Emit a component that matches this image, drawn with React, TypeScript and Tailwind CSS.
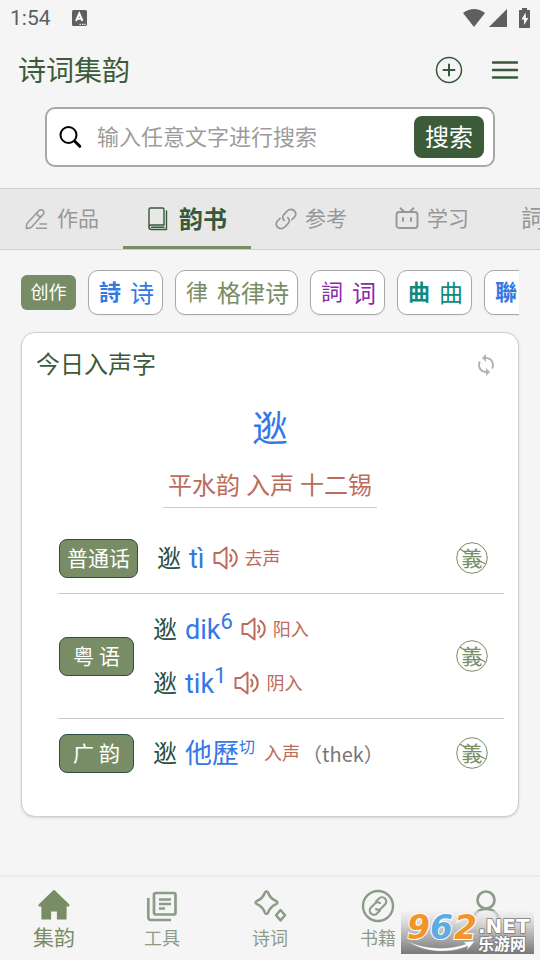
import React from "react";

type IconProps = { className?: string };

const PencilIcon = ({ className }: IconProps) => (
  <svg className={className} viewBox="0 0 24 24" fill="none" stroke="currentColor" strokeWidth="1.5" strokeLinecap="round" strokeLinejoin="round" aria-hidden="true">
    <path d="M14.500 3.600a2.700 2.700 0 0 1 3.900-.2 2.700 2.700 0 0 1 .3 3.900L7.500 19.600a5 5 0 0 1-2.600 1.300l-3 .6.2-3.300a5 5 0 0 1 1.300-2.700z" />
    <path d="M12.400 6c.5 2.300 2 3.700 4.200 4M15.500 17h6.500M12 21.200h10" />
  </svg>
);

const BookIcon = ({ className }: IconProps) => (
  <svg className={className} viewBox="0 0 24 24" fill="none" stroke="currentColor" strokeWidth="1.400" strokeLinecap="round" strokeLinejoin="round" aria-hidden="true">
    <path d="M3.500 1h12a1.500 1.500 0 0 1 1.500 1.500V18H4a2 2 0 0 0-2 2V2.500A1.500 1.500 0 0 1 3.500 1z" />
    <path d="M2 20a2.500 2.500 0 0 0 2.500 2.500H19.500V4M4.500 20.300H17" />
  </svg>
);

const ChainIcon = ({ className }: IconProps) => (
  <svg className={className} viewBox="0 0 24 24" fill="none" stroke="currentColor" strokeWidth="1.800" strokeLinecap="round" strokeLinejoin="round" aria-hidden="true">
    <path d="M10 13.500a4.700 4.700 0 0 1-.4-6.300l3.800-4a5.200 5.200 0 0 1 8 .2 5 5 0 0 1-.3 6.600l-2.600 2.600" />
    <path d="M14 10.500a4.700 4.700 0 0 1 .4 6.300l-3.800 4a5.200 5.200 0 0 1-8-.2 5 5 0 0 1 .3-6.600l2.600-2.600" />
  </svg>
);

const ScreenIcon = ({ className }: IconProps) => (
  <svg className={className} viewBox="0 0 24 24" fill="none" stroke="currentColor" strokeWidth="1.900" strokeLinecap="round" strokeLinejoin="round" aria-hidden="true">
    <rect x="1.500" y="5" width="21" height="16" rx="2.800" />
    <path d="m5.500 1.300 4 3.700M18.500 1.300 14.500 5M8 11v3M16 11v3" />
  </svg>
);

const SearchIcon = ({ className }: IconProps) => (
  <svg className={className} viewBox="0 0 24 24" fill="none" stroke="currentColor" strokeLinecap="round" aria-hidden="true">
    <circle cx="9.500" cy="10" r="8" strokeWidth="2" />
    <path d="m15.800 16.300 5 5" strokeWidth="3" />
  </svg>
);

const PlusCircleIcon = ({ className }: IconProps) => (
  <svg className={className} viewBox="0 0 28 28" fill="none" stroke="currentColor" aria-hidden="true">
    <circle cx="14" cy="14" r="12.500" strokeWidth="1.500" />
    <path d="M14 8.500v11M8.500 14h11" strokeWidth="2" strokeLinecap="round" />
  </svg>
);

const MenuIcon = ({ className }: IconProps) => (
  <svg className={className} viewBox="0 0 28 28" fill="none" stroke="currentColor" strokeWidth="2.400" strokeLinecap="round" aria-hidden="true">
    <path d="M2 6.500h24M2 14h24M2 21.500h24" />
  </svg>
);

const SyncIcon = ({ className }: IconProps) => (
  <svg className={className} viewBox="0 0 24 24" fill="currentColor" aria-hidden="true">
    <path d="M12 4V1L8 5l4 4V6c3.310 0 6 2.690 6 6 0 1.010-.25 1.970-.7 2.800l1.460 1.460A7.930 7.930 0 0 0 20 12c0-4.420-3.580-8-8-8zm0 14c-3.310 0-6-2.690-6-6 0-1.010.25-1.970.7-2.800L5.240 7.740A7.930 7.930 0 0 0 4 12c0 4.420 3.580 8 8 8v3l4-4-4-4v3z" />
  </svg>
);

const SpeakerIcon = ({ className }: IconProps) => (
  <svg className={className} viewBox="0 0 26 24" fill="none" stroke="currentColor" strokeWidth="2" strokeLinejoin="round" aria-hidden="true">
    <path d="M1.500 7h5L13.500 1.500v21L6.500 17h-5z" />
    <path d="M16.500 8.200c2.700 1.800 2.700 5.800 0 7.600M18.500 3.500c7 3.500 7 13.500 0 17" />
  </svg>
);

const HomeIcon = ({ className }: IconProps) => (
  <svg className={className} viewBox="0 0 32 32" fill="currentColor" stroke="currentColor" strokeWidth="1.200" strokeLinejoin="round" aria-hidden="true">
    <path d="M16 1.500 30.500 15.500a.8.800 0 0 1-.5 1.500H28v13h-8.500v-8h-7v8H4V17H2a.8.800 0 0 1-.5-1.500z" />
  </svg>
);

const LibraryIcon = ({ className }: IconProps) => (
  <svg className={className} viewBox="0 0 34 34" fill="none" stroke="currentColor" strokeWidth="2.700" aria-hidden="true">
    <rect x="9" y="4" width="21.500" height="21.500" rx="1.800" />
    <path d="M3.300 9v19.500A2.500 2.500 0 0 0 5.800 31H26M14 10.500h12M14 15h12M14 19.500h6" />
  </svg>
);

const SparkIcon = ({ className }: IconProps) => (
  <svg className={className} viewBox="0 0 34 34" fill="none" stroke="currentColor" strokeWidth="2.500" strokeLinejoin="round" aria-hidden="true">
    <path d="M12 3.500c1-1.300 2-1.300 3 0 1.500 4.500 3.500 6.500 8.500 8.700 1.200.8 1.200 2 0 2.600-5 2.200-7 4.200-8.500 9.200-1 1.300-2 1.300-3 0-1.500-5-3.500-7-8.500-9.200-1.200-.6-1.200-1.800 0-2.600C8.500 10 10.500 8 12 3.500z" />
    <path d="m27.500 21 4.500 5.200-4.500 5.200-4.500-5.200z" />
  </svg>
);

const LinkCircleIcon = ({ className }: IconProps) => (
  <svg className={className} viewBox="0 0 34 34" fill="none" stroke="currentColor" strokeLinecap="round" aria-hidden="true">
    <circle cx="17" cy="17" r="15" strokeWidth="2.400" />
    <path d="m15 12.500 3-3a4.200 4.200 0 0 1 6 6l-4 4a4.200 4.200 0 0 1-5 .5M19 21.500l-3 3a4.200 4.200 0 0 1-6-6l4-4a4.200 4.200 0 0 1 5-.5" strokeWidth="2.100" />
  </svg>
);

const PersonIcon = ({ className }: IconProps) => (
  <svg className={className} viewBox="0 0 34 34" fill="none" stroke="currentColor" strokeWidth="2.700" aria-hidden="true">
    <circle cx="17" cy="11" r="8.500" />
    <path d="M4 33c0-8 5-13 13-13s13 5 13 13" />
  </svg>
);

const StatusBar = () => (
  <div className="flex h-9 items-center justify-between pl-[10px] pr-2 text-[#5f5f5f]">
    <div className="flex items-center gap-5">
      <span className="text-[21px] leading-8">1:54</span>
      <svg className="size-4" viewBox="0 0 16 16" aria-hidden="true">
        <rect x="1" width="15" height="16" rx="1.500" fill="currentColor" />
        <path d="M5 11 8.300 3.500 11.500 11M6.200 8.800h4" fill="none" stroke="#fff" strokeWidth="2" />
        <path d="M8.500 14.300h1.300M11 14.300h1.300M13.300 14.300h1.300" stroke="#fff" strokeWidth="1.300" />
      </svg>
    </div>
    <svg className="h-5 w-[70px]" viewBox="0 0 70 20" fill="currentColor" aria-hidden="true">
      <path d="M1 5Q12-3 23 5L12 19z" />
      <path d="M27 19 45 1v18z" />
      <path d="M57 2h3V0h5v2h3v18H57z" />
      <path d="M63.500 4.500 59.500 11.500h2.500V17l4.500-7H64z" fill="#f5f5f5" />
    </svg>
  </div>
);

const tabs = [
  { label: "作品", Icon: PencilIcon, size: "h-6 w-[25px]", active: false },
  { label: "韵书", Icon: BookIcon, size: "size-6", active: true },
  { label: "参考", Icon: ChainIcon, size: "size-[22px]", active: false },
  { label: "学习", Icon: ScreenIcon, size: "size-6", active: false },
];

const chips = [
  { mark: "詩", label: "诗", tone: "text-[#3577e5]", weight: "font-bold" },
  { mark: "律", label: "格律诗", tone: "text-[#788d65]", weight: "font-normal" },
  { mark: "詞", label: "词", tone: "text-[#8a2aa8]", weight: "font-normal" },
  { mark: "曲", label: "曲", tone: "text-[#0f8a80]", weight: "font-bold" },
  { mark: "聯", label: "对联", tone: "text-[#3577e5]", weight: "font-bold" },
];

type Reading = { sound: string; sup?: string; tone: string; audio: boolean; note?: string };

const entries: { source: string; pill: string; row: string; readings: Reading[] }[] = [
  { source: "普通话", pill: "w-[79px]", row: "h-[70px]", readings: [{ sound: "tì", tone: "去声", audio: true }] },
  {
    source: "粤 语",
    pill: "w-[75px]",
    row: "h-[125px] border-t",
    readings: [
      { sound: "dik", sup: "6", tone: "阳入", audio: true },
      { sound: "tik", sup: "1", tone: "阴入", audio: true },
    ],
  },
  {
    source: "广 韵",
    pill: "w-[75px]",
    row: "h-[69px] border-t",
    readings: [{ sound: "他歷", sup: "切", tone: "入声", audio: false, note: "（thek）" }],
  },
];

const ReadingLine = ({ reading }: { reading: Reading }) => (
  <div className="flex h-[54px] items-center whitespace-nowrap pt-[2px]">
    <span className="mr-2 text-2xl text-[#2c4f46]">逖</span>
    <span className="flex items-center text-[27px] text-[#3577e5]">
      {reading.sound}
      {reading.sup && (
        <sup className={reading.sup === "切" ? "top-0 mb-3 text-base leading-4" : "top-0 mb-4 text-[22px] leading-6"}>{reading.sup}</sup>
      )}
    </span>
    {reading.audio && (
      <button type="button" aria-label="播放读音" className="ml-2 pb-[2px] text-[#bd6b5a]">
        <SpeakerIcon className="h-6 w-[26px]" />
      </button>
    )}
    <span className={reading.audio ? "ml-[6px] text-lg text-[#bd6b5a]" : "ml-[9px] text-lg text-[#bd6b5a]"}>{reading.tone}</span>
    {reading.note && <span className="ml-[2px] font-['Noto_Sans_CJK_SC',sans-serif] text-xl text-[#777777]">{reading.note}</span>}
  </div>
);

const MeaningButton = () => (
  <button type="button" aria-label="释义" className="ml-auto mr-4 text-[#788d65]">
    <svg className="size-8" viewBox="0 0 32 32" aria-hidden="true">
      <circle cx="16" cy="16" r="15.300" fill="none" stroke="currentColor" strokeWidth="1" />
      <path d="M4 7 10 11M22 18 29.500 22" stroke="currentColor" strokeWidth="1.200" />
      <text x="16" y="24" textAnchor="middle" fontSize="21" fill="currentColor">義</text>
    </svg>
  </button>
);

const navItems = [
  { label: "集韵", Icon: HomeIcon, active: true },
  { label: "工具", Icon: LibraryIcon, active: false },
  { label: "诗词", Icon: SparkIcon, active: false },
  { label: "书籍", Icon: LinkCircleIcon, active: false },
  { label: "我的", Icon: PersonIcon, active: false },
];

const SiteBadge = () => (
  <svg className="pointer-events-none absolute bottom-[6px] right-[6px] h-[43px] w-[133px]" viewBox="0 0 133 43" role="img" aria-label="962.NET 乐游网">
    <defs>
      <linearGradient id="badge-bg" x1="0" y1="0" x2="0" y2="1">
        <stop offset="0" stopColor="#f0f0f0" stopOpacity="0.6" />
        <stop offset="0.500" stopColor="#b4b4b4" stopOpacity="0.9" />
        <stop offset="1" stopColor="#777777" />
      </linearGradient>
    </defs>
    <rect width="133" height="43" fill="url(#badge-bg)" />
    <path d="M6 30C25 43 51 42 67 35l-1 4 8-9-12 1 3 2C49 39 25 39 6 30z" fill="#fff" stroke="#999" strokeWidth="0.400" />
    <g fontFamily="'DejaVu Sans', sans-serif" fontWeight="700" fontStyle="italic" fontSize="33" stroke="#fff" strokeWidth="2" paintOrder="stroke">
      <text x="6" y="28" fill="#f29427">9</text>
      <text x="29" y="28" fill="#5dabe0">6</text>
      <text x="53" y="28" fill="#f29427">2</text>
    </g>
    <g fontWeight="700" fill="#fff" stroke="#777" strokeWidth="1.500" paintOrder="stroke">
      <text x="77" y="22" fontFamily="'DejaVu Sans', sans-serif" fontSize="20">.NET</text>
      <text x="77" y="39" fontSize="16">乐游网</text>
    </g>
  </svg>
);

export default function App() {
  return (
    <div className="relative flex min-h-screen flex-col overflow-hidden bg-[#f5f5f5] font-[Roboto,'Noto_Sans_CJK_SC',sans-serif]">
      <StatusBar />
      <header className="flex h-[71px] items-center justify-between pl-[18px] pr-[21px]">
        <h1 className="text-[28px] font-normal text-[#3b5b39]">诗词集韵</h1>
        <div className="flex items-center gap-7 pb-[3px] text-[#36593a]">
          <button type="button" aria-label="新建"><PlusCircleIcon className="size-7" /></button>
          <button type="button" aria-label="菜单"><MenuIcon className="size-7" /></button>
        </div>
      </header>

      <form className="mx-[45px] flex h-[60px] items-center rounded-[10px] border-2 border-[#a8a8a8] bg-white pl-3 pr-[9px]" onSubmit={(e) => e.preventDefault()}>
        <SearchIcon className="size-6 shrink-0 text-black" />
        <input type="text" aria-label="搜索" placeholder="输入任意文字进行搜索" className="ml-[14px] min-w-0 flex-1 bg-transparent text-[22px] text-[#333333] outline-none placeholder:text-[#9c9c9c]" />
        <button type="submit" className="h-[42px] w-[70px] rounded-lg bg-[#3b5b39] pt-[2px] text-2xl text-white">搜索</button>
      </form>

      <div role="tablist" className="mt-[21px] flex h-[62px] shrink-0 overflow-hidden border-y border-[#cecece] bg-[#e8e8e8]">
        {tabs.map(({ label, Icon, size, active }) => (
          <button
            key={label}
            type="button"
            role="tab"
            aria-selected={active}
            className={
              active
                ? "flex shrink-0 items-center gap-2 border-b-3 border-[#788d65] px-6 pt-[3px] text-2xl font-bold text-[#36593a]"
                : "flex shrink-0 items-center gap-2 px-6 text-[21px] text-[#979797]"
            }
          >
            <Icon className={size} />
            <span className="pt-[2px]">{label}</span>
          </button>
        ))}
        <button type="button" role="tab" aria-selected={false} className="shrink-0 px-7 text-2xl text-[#979797]">詞</button>
      </div>

      <div className="mx-[21px] mt-5 flex items-center gap-3 overflow-hidden whitespace-nowrap pb-[2px]">
        <span className="flex h-[35px] w-[55px] shrink-0 items-center justify-center rounded-md bg-[#788d65] text-lg text-white">创作</span>
        {chips.map(({ mark, label, tone, weight }) => (
          <button key={mark} type="button" className={`flex h-[45px] shrink-0 items-center gap-[9px] rounded-[10px] border border-[#a8a8a8] bg-white pl-[10px] pr-2 text-2xl shadow-xs ${tone}`}>
            <span className={`text-[22px] ${weight}`}>{mark}</span>
            <span className="pt-[2px]">{label}</span>
          </button>
        ))}
      </div>

      <main className="mx-[21px] mt-[15px] rounded-[14px] border border-[#cfcfcf] bg-white pb-[29px] shadow-sm">
        <div className="flex h-16 items-center justify-between pl-[14px] pr-5">
          <h2 className="text-2xl font-normal text-[#3b5b39]">今日入声字</h2>
          <button type="button" aria-label="换一个" className="text-[#b3b3b3]"><SyncIcon className="size-6" /></button>
        </div>
        <div className="flex flex-col items-center">
          <p className="mt-[5px] text-4xl leading-[56px] text-[#3577e5]">逖</p>
          <p className="mt-[7px] border-b border-[#cccccc] px-[5px] text-2xl leading-[42px] text-[#bd6b5a]">平水韵 入声 十二锡</p>
        </div>
        <div className="ml-9 mr-[14px] mt-[15px]">
          {entries.map(({ source, pill, row, readings }) => (
            <div key={source} className={`flex items-center border-[#cccccc] ${row}`}>
              <span className={`ml-[1px] mr-[19px] flex h-[39px] shrink-0 items-center justify-center rounded-lg border border-[#2c4f46] bg-[#788d65] pt-[3px] text-[21px] text-white ${pill}`}>{source}</span>
              <div>
                {readings.map((reading) => (
                  <ReadingLine key={reading.sound} reading={reading} />
                ))}
              </div>
              <MeaningButton />
            </div>
          ))}
        </div>
      </main>

      <nav className="mt-auto grid h-[85px] grid-cols-5 border-t-2 border-[#ebebeb]">
        {navItems.map(({ label, Icon, active }) => (
          <a
            key={label}
            href="#"
            aria-current={active ? "page" : undefined}
            className={
              active
                ? "flex flex-col items-center pt-3 text-[21px] leading-[34px] text-[#788d65]"
                : "flex flex-col items-center pt-3 text-lg leading-8 text-[#8c9c88]"
            }
          >
            <Icon className={active ? "size-8" : "size-[34px]"} />
            <span>{label}</span>
          </a>
        ))}
      </nav>
      <SiteBadge />
    </div>
  );
}
